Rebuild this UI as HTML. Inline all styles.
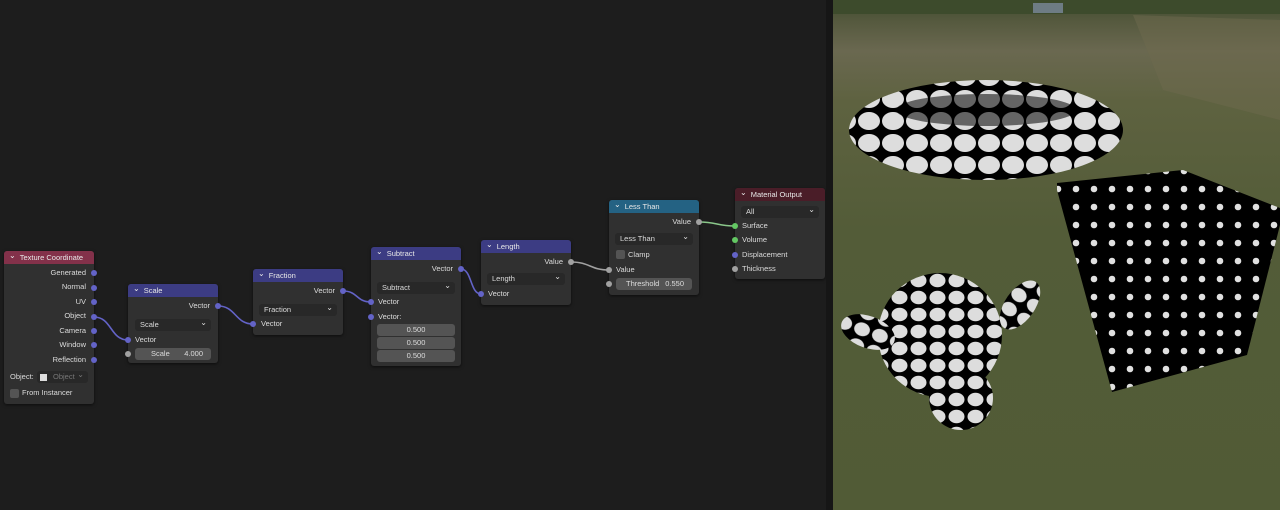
<!DOCTYPE html>
<html><head><meta charset="utf-8"><style>
*{margin:0;padding:0;box-sizing:border-box}
body{width:1280px;height:510px;overflow:hidden;background:#1d1d1d;font-family:"Liberation Sans",sans-serif;font-size:7.5px;color:#dcdcdc;position:relative}
.n{position:absolute;background:#303030;border-radius:3px;box-shadow:0 1px 3px rgba(0,0,0,.6)}
.h{height:13px;border-radius:3px 3px 0 0;padding-left:5px;line-height:13px;color:#e8e8e8;font-size:7.5px}
.h:before{content:"⌄";font-size:8px;margin-right:4px;position:relative;top:-2px}
.t{position:absolute;line-height:10px;white-space:nowrap}
.r{right:8px;text-align:right}
.s{position:absolute;width:6px;height:6px;border-radius:50%}
.v{background:#6363c7}.f{background:#a1a1a1}.g{background:#63c763}
.dd{position:absolute;height:12px;background:#282828;border-radius:3px;padding-left:5px;line-height:12px}
.dd:after{content:"⌄";position:absolute;right:4px;top:-2px;font-size:8px}
.fld{position:absolute;height:12px;background:#545454;border-radius:3px;line-height:12px;text-align:center}
.vb{background:#3c3c83}
</style></head><body>
<svg width="830" height="510" style="position:absolute;left:0;top:0" fill="none" stroke-width="1.6">
<path d="M94 317 C112 317 110 340 128 340" stroke="#6363c7"/>
<path d="M218 306 C236 306 235 324 253 324" stroke="#6363c7"/>
<path d="M343 291 C358 291 356 302 371 302" stroke="#6363c7"/>
<path d="M461 269 C472 269 470 294 481 294" stroke="#6363c7"/>
<path d="M571 262 C590 262 590 270 609 270" stroke="#a1a1a1"/>
<path d="M699 222 C717 222 717 226 735 226" stroke="#8ac78a"/>
</svg>

<div class="n" style="left:4px;top:251px;width:90px;height:153px"><div class="h" style="background:#83314a">Texture Coordinate</div>
<div class="t r" style="top:17px">Generated</div><div class="t r" style="top:31px">Normal</div><div class="t r" style="top:46px">UV</div><div class="t r" style="top:60px">Object</div><div class="t r" style="top:75px">Camera</div><div class="t r" style="top:89px">Window</div><div class="t r" style="top:104px">Reflection</div>
<div class="t" style="left:6px;top:121px">Object:</div>
<div class="dd" style="left:33px;top:120px;width:51px;color:#777;padding-left:16px">Object</div>
<div style="position:absolute;left:36px;top:123px;width:7px;height:7px;border:1px solid #ddd;background:#ddd"></div>
<div style="position:absolute;left:6px;top:138px;width:9px;height:9px;background:#545454;border-radius:2px"></div>
<div class="t" style="left:18px;top:137px">From Instancer</div>
</div>
<div class="s v" style="left:91px;top:270px"></div><div class="s v" style="left:91px;top:285px"></div><div class="s v" style="left:91px;top:299px"></div><div class="s v" style="left:91px;top:314px"></div><div class="s v" style="left:91px;top:328px"></div><div class="s v" style="left:91px;top:342px"></div><div class="s v" style="left:91px;top:357px"></div>

<div class="n" style="left:128px;top:284px;width:90px;height:79px"><div class="h vb">Scale</div>
<div class="t r" style="top:17px">Vector</div>
<div class="dd" style="left:7px;top:35px;width:76px">Scale</div>
<div class="t" style="left:7px;top:51px">Vector</div>
<div class="fld" style="left:7px;top:64px;width:76px"><span style="position:absolute;left:16px">Scale</span><span style="position:absolute;right:8px">4.000</span></div>
</div>
<div class="s v" style="left:215px;top:303px"></div><div class="s v" style="left:125px;top:337px"></div><div class="s f" style="left:125px;top:351px"></div>

<div class="n" style="left:253px;top:269px;width:90px;height:66px"><div class="h vb">Fraction</div>
<div class="t r" style="top:17px">Vector</div>
<div class="dd" style="left:6px;top:35px;width:78px">Fraction</div>
<div class="t" style="left:8px;top:50px">Vector</div>
</div>
<div class="s v" style="left:340px;top:288px"></div><div class="s v" style="left:250px;top:321px"></div>

<div class="n" style="left:371px;top:247px;width:90px;height:119px"><div class="h vb">Subtract</div>
<div class="t r" style="top:17px">Vector</div>
<div class="dd" style="left:6px;top:35px;width:78px">Subtract</div>
<div class="t" style="left:7px;top:50px">Vector</div>
<div class="t" style="left:7px;top:65px">Vector:</div>
<div class="fld" style="left:6px;top:77px;width:78px">0.500</div>
<div class="fld" style="left:6px;top:90px;width:78px">0.500</div>
<div class="fld" style="left:6px;top:103px;width:78px">0.500</div>
</div>
<div class="s v" style="left:458px;top:266px"></div><div class="s v" style="left:368px;top:299px"></div><div class="s v" style="left:368px;top:314px"></div>

<div class="n" style="left:481px;top:240px;width:90px;height:65px"><div class="h vb">Length</div>
<div class="t r" style="top:17px">Value</div>
<div class="dd" style="left:6px;top:33px;width:78px">Length</div>
<div class="t" style="left:7px;top:49px">Vector</div>
</div>
<div class="s f" style="left:568px;top:259px"></div><div class="s v" style="left:478px;top:291px"></div>

<div class="n" style="left:609px;top:200px;width:90px;height:95px"><div class="h" style="background:#246283">Less Than</div>
<div class="t r" style="top:17px">Value</div>
<div class="dd" style="left:6px;top:33px;width:78px">Less Than</div>
<div style="position:absolute;left:7px;top:50px;width:9px;height:9px;background:#545454;border-radius:2px"></div>
<div class="t" style="left:19px;top:50px">Clamp</div>
<div class="t" style="left:7px;top:65px">Value</div>
<div class="fld" style="left:7px;top:78px;width:76px"><span style="position:absolute;left:10px">Threshold</span><span style="position:absolute;right:8px">0.550</span></div>
</div>
<div class="s f" style="left:696px;top:219px"></div><div class="s f" style="left:606px;top:267px"></div><div class="s f" style="left:606px;top:281px"></div>

<div class="n" style="left:735px;top:188px;width:90px;height:91px"><div class="h" style="background:#4a1d28">Material Output</div>
<div class="dd" style="left:6px;top:18px;width:78px">All</div>
<div class="t" style="left:7px;top:33px">Surface</div><div class="t" style="left:7px;top:47px">Volume</div><div class="t" style="left:7px;top:62px">Displacement</div><div class="t" style="left:7px;top:76px">Thickness</div>
</div>
<div class="s g" style="left:732px;top:223px"></div><div class="s g" style="left:732px;top:237px"></div><div class="s v" style="left:732px;top:252px"></div><div class="s f" style="left:732px;top:266px"></div>

<div style="position:absolute;left:826px;top:0;width:7px;height:510px;background:#161616"></div>
<svg width="447" height="510" style="position:absolute;left:833px;top:0">
<defs>
<linearGradient id="bg" x1="0" y1="0" x2="0" y2="1">
<stop offset="0" stop-color="#3f4a2e"/><stop offset=".04" stop-color="#55593e"/><stop offset=".1" stop-color="#6a6850"/><stop offset=".2" stop-color="#5e6240"/><stop offset=".45" stop-color="#535c38"/><stop offset="1" stop-color="#515b36"/></linearGradient>
<pattern id="dot" width="18" height="18" patternUnits="userSpaceOnUse"><rect width="18" height="18" fill="#000"/><circle cx="9" cy="9" r="3.3" fill="#e0e0e0"/></pattern>
<pattern id="blob" width="24" height="22" patternUnits="userSpaceOnUse"><rect width="24" height="22" fill="#000"/><ellipse cx="12" cy="11" rx="11" ry="9" fill="#ddd"/></pattern>
<pattern id="blob2" width="19" height="17" patternUnits="userSpaceOnUse"><rect width="19" height="17" fill="#000"/><ellipse cx="9.5" cy="8.5" rx="8" ry="6.8" fill="#ddd"/></pattern>
</defs>
<rect width="447" height="510" fill="url(#bg)"/>
<rect x="0" y="0" width="447" height="14" fill="#3d4b2c"/>
<rect x="200" y="3" width="30" height="10" fill="#6e7c84"/>
<path d="M300 15 L447 20 L447 120 L330 90Z" fill="#6e6a4e" opacity=".5"/>
<ellipse cx="153" cy="130" rx="137" ry="50" fill="url(#blob)"/>
<ellipse cx="153" cy="110" rx="90" ry="16" fill="#000" opacity=".55"/>
<path d="M224 183 L350 170 L447 208 L447 225 L414 355 L279 392 L224 190Z" fill="url(#dot)"/>
<g fill="url(#blob2)">
<circle cx="107" cy="335" r="62"/>
<ellipse cx="35" cy="332" rx="28" ry="16" transform="rotate(20 35 332)"/>
<ellipse cx="187" cy="305" rx="15" ry="28" transform="rotate(35 187 305)"/>
<ellipse cx="128" cy="398" rx="32" ry="32"/>
</g>
</svg>
</body></html>
